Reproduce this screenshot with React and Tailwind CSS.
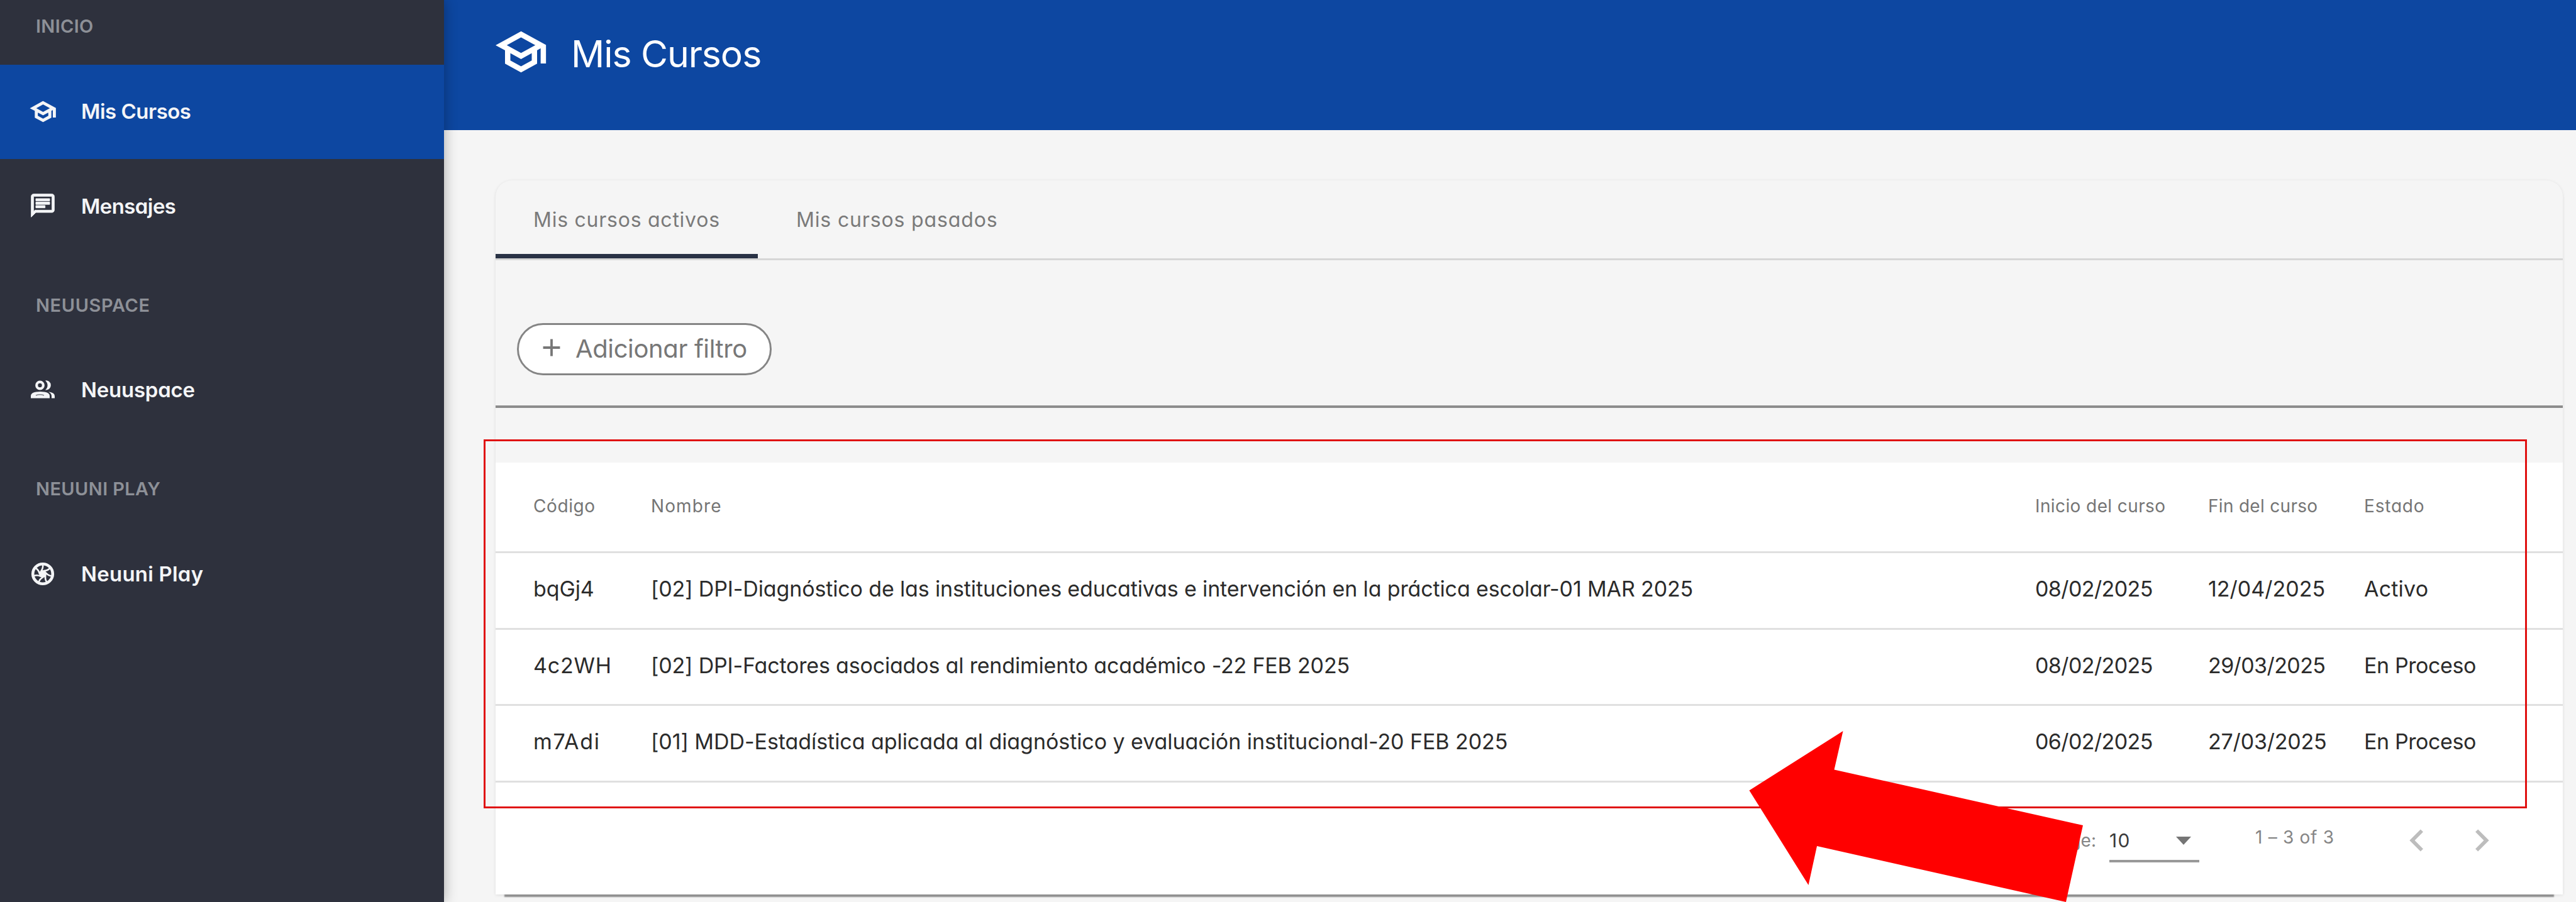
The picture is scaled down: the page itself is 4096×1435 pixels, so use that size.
import React from 'react';
import { MdChevronLeft, MdChevronRight, MdAdd } from 'react-icons/md';

function SchoolIcon({ className }) {
  return (
    <svg viewBox="0 0 24 24" className={className} fill="currentColor" stroke="currentColor">
      <path d="M12 3 1 9l4 2.180v6L12 21l7-3.820v-6l2-1.090V17h2V9L12 3zm6.820 6L12 12.720 5.180 9 12 5.280 18.820 9zM17 15.990l-5 2.730-5-2.730v-3.720L12 15l5-2.730v3.720z" />
    </svg>
  );
}

function ChatIcon({ className }) {
  return (
    <svg viewBox="0 0 24 24" className={className} fill="currentColor" stroke="currentColor">
      <path d="M4 4h16v12H5.170L4 17.170V4m0-2c-1.100 0-1.990.9-1.990 2L2 22l4-4h14c1.100 0 2-.9 2-2V4c0-1.100-.9-2-2-2H4zm2 10h8v2H6v-2zm0-3h12v2H6V9zm0-3h12v2H6V6z" />
    </svg>
  );
}

function ApertureIcon({ className }) {
  const blades = [0, 51.4, 102.9, 154.3, 205.7, 257.1, 308.6];
  return (
    <svg viewBox="0 0 40 40" className={className} fill="none" stroke="currentColor">
      <circle cx="20" cy="20" r="15.8" strokeWidth="4.6" />
      <circle cx="20" cy="20" r="6" fill="currentColor" stroke="none" />
      {blades.map((a) => (
        <path key={a} d="M17 16 Q21 11 20 5" strokeWidth="2.6" transform={`rotate(${a} 20 20)`} />
      ))}
    </svg>
  );
}

function PeopleIcon({ className }) {
  return (
    <svg viewBox="0 0 42 42" className={className} fill="currentColor">
      <circle cx="16.5" cy="14" r="5.3" fill="none" stroke="currentColor" strokeWidth="4.2" />
      <path d="M25 6.4A7.6 7.6 0 1 1 25 21.4Q28.6 18.5 28.6 14T25 6.4Z" />
      <path d="M2 34.5V31Q2 24 17 24T32 31V34.5Z" />
      <path d="M30 24.2Q40 25.5 40 31V34.5H35V31Q35 27 30 24.2Z" />
      <path d="M10 30Q16.5 27.6 23 30" fill="none" stroke="#7d8088" strokeWidth="1.6" />
    </svg>
  );
}

function SectionLabel({ children, className }) {
  return (
    <div className={`flex items-center pl-[57px] text-[29px] leading-none font-semibold text-[#8d9097] ${className}`}>
      {children}
    </div>
  );
}

function NavItem({ icon, label, className }) {
  return (
    <a className={`flex items-center pl-[46px] text-[#f4f5f7] ${className}`}>
      <span className="flex w-[44px] shrink-0 justify-center">{icon}</span>
      <span className="ml-[39px] text-[33px] leading-none font-semibold">{label}</span>
    </a>
  );
}

function Sidebar() {
  return (
    <aside className="relative z-10 flex w-[706px] shrink-0 flex-col bg-[#2e313d] shadow-[0_0_20px_rgba(0,0,0,0.32)]">
      <SectionLabel className="h-[103px] pb-[21px] tracking-[0.32px]">INICIO</SectionLabel>
      <NavItem
        className="h-[150px] bg-[#0d47a1] pb-[2px] tracking-[-0.5px]"
        icon={<SchoolIcon className="size-[43px] stroke-[0.7px]" />}
        label="Mis Cursos"
      />
      <NavItem
        className="h-[153px] pb-[2px] tracking-[-0.6px]"
        icon={<ChatIcon className="size-[44px] -translate-y-[2px] stroke-[0.5px]" />}
        label="Mensajes"
      />
      <SectionLabel className="h-[139px] pt-[20px] tracking-[0.57px]">NEUUSPACE</SectionLabel>
      <NavItem
        className="h-[152px] pb-[2px] tracking-[-0.25px]"
        icon={<PeopleIcon className="size-[42px]" />}
        label="Neuuspace"
      />
      <SectionLabel className="h-[141px] pt-[20px] tracking-[0.37px]">NEUUNI PLAY</SectionLabel>
      <NavItem
        className="h-[152px] pb-[2px] tracking-[0.2px]"
        icon={<ApertureIcon className="size-[40px]" />}
        label="Neuuni Play"
      />
    </aside>
  );
}

const GRID =
  'grid grid-cols-[187px_2201px_275px_248px_1fr] items-center pl-[60px] border-b-[3px] border-[#e0e0e0] whitespace-nowrap';

const ROWS = [
  {
    code: 'bqGj4',
    codeClass: 'tracking-[-0.1px]',
    name: '[02] DPI-Diagnóstico de las instituciones educativas e intervención en la práctica escolar-01 MAR 2025',
    nameClass: 'tracking-[-0.14px]',
    start: '08/02/2025',
    end: '12/04/2025',
    endClass: 'tracking-[0px]',
    status: 'Activo',
    statusClass: 'tracking-[0.2px]',
  },
  {
    code: '4c2WH',
    codeClass: 'tracking-[0.8px]',
    name: '[02] DPI-Factores asociados al rendimiento académico -22 FEB 2025',
    nameClass: 'tracking-[-0.18px]',
    start: '08/02/2025',
    end: '29/03/2025',
    endClass: 'tracking-[-0.6px]',
    status: 'En Proceso',
    statusClass: 'tracking-[-0.4px]',
  },
  {
    code: 'm7Adi',
    codeClass: 'tracking-[1.8px]',
    name: '[01] MDD-Estadística aplicada al diagnóstico y evaluación institucional-20 FEB 2025',
    nameClass: 'tracking-[-0.06px]',
    start: '06/02/2025',
    end: '27/03/2025',
    endClass: 'tracking-[-0.2px]',
    status: 'En Proceso',
    statusClass: 'tracking-[-0.4px]',
  },
];

function CoursesTable() {
  return (
    <div className="bg-white">
      <div className={`${GRID} h-[144px] pb-[4px] text-[28px] leading-none text-[#757575]`}>
        <span className="tracking-[0.6px]">Código</span>
        <span className="tracking-[1.1px]">Nombre</span>
        <span className="tracking-[0.4px]">Inicio del curso</span>
        <span className="tracking-[0.3px]">Fin del curso</span>
        <span className="tracking-[0.8px]">Estado</span>
      </div>
      {ROWS.map((r) => (
        <div key={r.code} className={`${GRID} h-[121.6px] pb-[4px] text-[34px] leading-none text-[#2b2b2b]`}>
          <span className={r.codeClass}>{r.code}</span>
          <span className={r.nameClass}>{r.name}</span>
          <span className="tracking-[-0.6px]">{r.start}</span>
          <span className={r.endClass}>{r.end}</span>
          <span className={r.statusClass}>{r.status}</span>
        </div>
      ))}
    </div>
  );
}

function Paginator() {
  return (
    <div className="flex h-[178px] items-center justify-end bg-white pt-[7px] pr-[94px] text-[28px] leading-none whitespace-nowrap text-[#858585]">
      <span>Items per page:</span>
      <div className="ml-[21px] flex h-[70px] w-[143px] items-center justify-between border-b-[4px] border-[#999] pt-[4px] pr-[13px] text-[30px] tracking-[1.2px] text-[#3a3a3a]">
        <span>10</span>
        <svg viewBox="0 0 24 13" className="h-[13px] w-[24px] fill-[#757575]">
          <path d="M0 0h24L12 13z" />
        </svg>
      </div>
      <span className="mb-[11px] ml-[89px] w-[126px] tracking-[0.7px]">1 – 3 of 3</span>
      <MdChevronLeft className="ml-[96px] size-[70px] text-[#bdbdbd]" />
      <MdChevronRight className="ml-[33px] size-[70px] text-[#bdbdbd]" />
    </div>
  );
}

function CoursesCard() {
  return (
    <section className="mt-[80px] ml-[82px] w-[3287px] rounded-t-[26px] bg-[#f5f5f5] shadow-[0_18px_2px_-14px_#8f8f8f,0_1px_5px_rgba(0,0,0,0.1)]">
      <div className="flex h-[127px] border-b-[3px] border-[#d6d6d6] text-[32px] leading-none text-[#7a7a7a]">
        <div className="flex w-[417px] items-center border-b-[7px] border-[#293245] pt-[9px] pl-[60px] tracking-[0.75px]">
          Mis cursos activos
        </div>
        <div className="flex items-center border-b-[7px] border-transparent pt-[9px] pl-[61px] tracking-[0.85px]">
          Mis cursos pasados
        </div>
      </div>
      <div className="flex h-[235px] items-start border-b-[4px] border-[#8c8c8c] pt-[100px] pl-[34px]">
        <button className="flex h-[83px] w-[405px] items-center rounded-full border-[3px] border-[#858585] bg-white pl-[29px] text-[#777]">
          <MdAdd className="size-[46px] -translate-y-[3px]" />
          <span className="ml-[15px] -translate-y-[1px] text-[40px] leading-none tracking-[-0.38px] whitespace-nowrap">
            Adicionar filtro
          </span>
        </button>
      </div>
      <div className="h-[87px]" />
      <CoursesTable />
      <Paginator />
    </section>
  );
}

export default function App() {
  return (
    <div className="relative flex h-[1435px] w-[4096px] overflow-hidden bg-[#f5f5f5] font-['Inter',sans-serif] [font-feature-settings:'cv11']">
      <Sidebar />
      <main className="flex min-w-0 flex-1 flex-col">
        <header className="flex h-[207px] shrink-0 items-start bg-[#0d47a1] pl-[80px] text-white">
          <SchoolIcon className="mt-[40px] size-[85px] stroke-[0.4px]" />
          <h1 className="mt-[56px] ml-[37px] text-[59px] leading-[60px] tracking-[-1.1px]">Mis Cursos</h1>
        </header>
        <CoursesCard />
      </main>

      {/* Annotations drawn over the page */}
      <div className="absolute top-[699px] left-[769px] z-20 h-[587px] w-[3249px] border-[3px] border-[#e01010]" />
      <svg viewBox="0 0 570 293" className="absolute top-[1162px] left-[2781px] z-20 h-[273px] w-[531px] fill-[#ff0000]">
        <path d="M0.5 102.5L160.5 1L145.5 67L570 162L541 293L116 197.5L101.5 264Z" />
      </svg>
    </div>
  );
}
